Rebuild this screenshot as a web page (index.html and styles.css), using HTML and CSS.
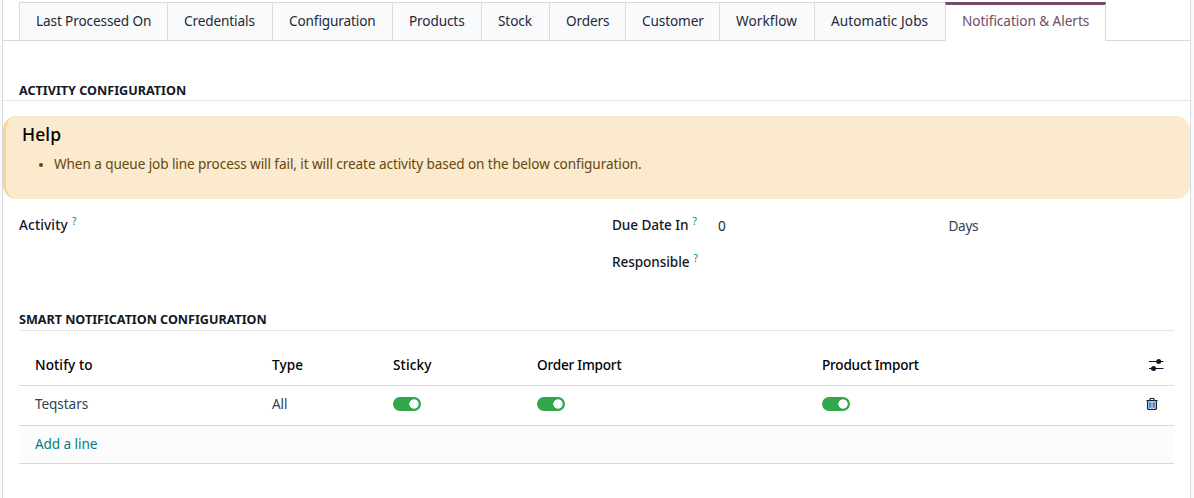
FILE: index.html
```html
<!DOCTYPE html>
<html lang="en">
<head>
  <meta charset="UTF-8" />
  <meta name="viewport" content="width=device-width, initial-scale=1.0"/>
  <title>Notification &amp; Alerts</title>
  <link rel="stylesheet" href="styles.css">
</head>
<body>

  <main class="sheet">
    <nav class="tabs">
      <a class="tab">Last Processed On</a>
      <a class="tab">Credentials</a>
      <a class="tab">Configuration</a>
      <a class="tab">Products</a>
      <a class="tab">Stock</a>
      <a class="tab">Orders</a>
      <a class="tab">Customer</a>
      <a class="tab wide">Workflow</a>
      <a class="tab wide">Automatic Jobs</a>
      <a class="tab active">Notification &amp; Alerts</a>
      <div class="tabs-rest"></div>
    </nav>

    <h2 class="section-title activity-title">Activity Configuration</h2>

    <div class="alert">
      <h3>Help</h3>
      <ul>
        <li>When a queue job line process will fail, it will create activity based on the below configuration.</li>
      </ul>
    </div>

    <div class="fields">
      <div class="field"><label class="activity">Activity</label><sup>?</sup></div>
      <div>
        <div class="field">
          <div class="field-label"><label>Due Date In</label><sup>?</sup></div>
          <span class="value">0</span>
          <span class="unit">Days</span>
        </div>
        <div class="field">
          <div class="field-label"><label>Responsible</label><sup>?</sup></div>
        </div>
      </div>
    </div>

    <section class="notifications">
      <h2 class="section-title smart-title">Smart Notification Configuration</h2>
      <div class="row head">
        <span>Notify to</span>
        <span>Type</span>
        <span>Sticky</span>
        <span class="import">Order Import</span>
        <span class="import">Product Import</span>
        <svg class="icon-options" width="16" height="14" viewBox="0 0 16 14">
          <path d="M1 3.5h14.5M1 10.5h14.5" stroke="#111827" stroke-width="1.1"/>
          <circle cx="10.7" cy="3.5" r="2.5" fill="#111827"/>
          <circle cx="5.5" cy="10.5" r="2.5" fill="#111827"/>
        </svg>
      </div>
      <div class="row line">
        <span>Teqstars</span>
        <span>All</span>
        <i class="switch"></i>
        <i class="switch"></i>
        <i class="switch"></i>
        <svg class="icon-trash" width="12" height="12" viewBox="0 0 12 12">
          <path d="M2 3h8v8H2z" fill="#a9c8e6"/>
          <path d="M4 4.5v5M8 4.5v5" stroke="#2474c6" stroke-width="1.5"/>
          <path d="M6 4.5v5" stroke="#b98e70"/>
          <path d="M1.5 2.5v7.8q0 1.2 1.2 1.2h6.6q1.2 0 1.2-1.2V2.5M.5 2.5h11M3.5 2.5l.8-2h3.4l.8 2" fill="none" stroke="#17202c" stroke-width="1.1"/>
        </svg>
      </div>
      <div class="row add"><a>Add a line</a></div>
    </section>
  </main>

</body>
</html>
```
FILE: styles.css
```css
* { margin: 0; padding: 0; box-sizing: border-box; }

body {
  background: #f9fafb;
  color: #374151;
  font-family: 'Noto Sans', sans-serif;
  font-size: 13.6px;
  letter-spacing: -0.09px;
  overflow: hidden;
}

.sheet {
  width: 1189px;
  height: 498px;
  margin-left: 2px;
  padding-top: 2px;
  background: #fff;
  border: 1px solid #d8dadd;
  border-width: 0 1px;
}

.tabs {
  display: grid;
  grid-template-columns: 148px 105px 120px 89px 68px 76px 94px 95px 131px 161px 1fr;
  height: 39px;
  padding-left: 16px;
  background: linear-gradient(#d8dadd, #d8dadd) left bottom / 16px 1px no-repeat;
}

.tab {
  padding-left: 16px;
  line-height: 36px;
  letter-spacing: -0.12px;
  white-space: nowrap;
  color: #1f2937;
  background: #f9fafb;
  border: 1px solid #d8dadd;
  border-right: 0;
}

.tab.wide { letter-spacing: 0.1px; }

.tab.active {
  color: #714b67;
  background: #fff;
  border-top: 3px solid #714b67;
  border-right: 1px solid #d8dadd;
  border-bottom: 0;
  line-height: 32px;
  letter-spacing: -0.05px;
}

.tabs-rest { border-bottom: 1px solid #d8dadd; }

.section-title {
  height: 20px;
  color: #111827;
  font-size: 12.6px;
  font-weight: 700;
  letter-spacing: 0;
  line-height: 19px;
  text-transform: uppercase;
  border-bottom: 1px solid #e2e4e6;
}

.activity-title {
  margin-top: 40px;
  padding-left: 16px;
}

.smart-title {
  letter-spacing: -0.03px;
  line-height: 18px;
}

.alert {
  height: 83px;
  margin-top: 15px;
  padding: 6px 16px;
  background: #fbeacd;
  border-left: 3px solid #f6d596;
  border-radius: 14px;
}

.alert h3 {
  color: #000;
  font-size: 17.5px;
  font-weight: 500;
  letter-spacing: 0.1px;
  line-height: 25px;
}

.alert ul {
  margin-top: 6px;
  padding-left: 32px;
  color: #66470e;
  line-height: 21px;
}

.alert li::marker { font-size: 11px; }

.fields {
  display: grid;
  grid-template-columns: 593px 1fr;
  height: 112px;
  padding: 8px 16px 0;
}

.field {
  display: flex;
  height: 37px;
  line-height: 36px;
}

.field label {
  color: #111827;
  font-weight: 500;
}

.field .activity { letter-spacing: 0.15px; }

.field sup {
  margin-left: 4px;
  color: #0180a5;
  font-size: 10px;
  line-height: 28px;
}

.field-label {
  display: flex;
  width: 106px;
}

.value {
  width: 230.5px;
  color: #1f2937;
  line-height: 38px;
}

.unit {
  letter-spacing: -0.3px;
  line-height: 38px;
}

.notifications { margin: 0 16px; }

.row {
  display: grid;
  grid-template-columns: 237px 121px 144px 285px 1fr auto;
  align-items: center;
  height: 40px;
  padding-left: 16px;
  border-bottom: 1px solid #d8dadd;
}

.head {
  height: 55px;
  padding-top: 13px;
  color: #000;
  font-weight: 500;
  letter-spacing: 0.1px;
}

.import { letter-spacing: -0.22px; }

.line { padding-bottom: 3px; }
.line span { padding-bottom: 2px; }

.icon-options { margin-right: 10px; }
.icon-trash { margin-right: 16px; }

.switch {
  width: 28px;
  height: 14px;
  border-radius: 7px;
  background: radial-gradient(circle at 21px 7px, #fff 4.3px, #31a74a 5px);
}

.add {
  height: 38px;
  padding-bottom: 2px;
  background: #fcfcfc;
}

.add a { color: #017e84; }
```
